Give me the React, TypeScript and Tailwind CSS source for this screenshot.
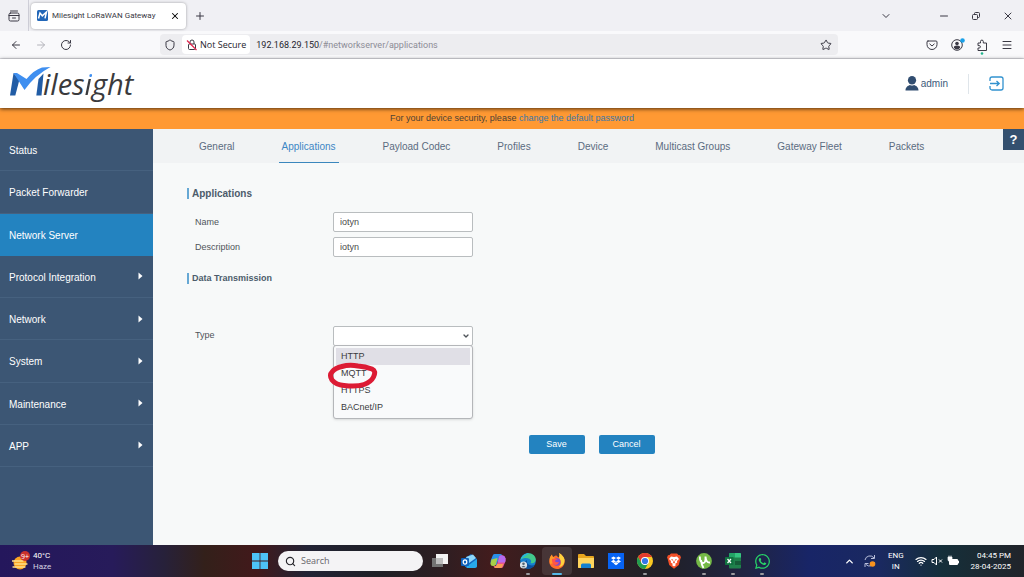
import React, { useState } from 'react';
import {
    ArrowLeft,
    ArrowRight,
    ChevronDown,
    ChevronUp,
    Menu,
    Minus,
    Plus,
    RotateCw,
    Search,
    Shield,
    Star,
    Wifi,
    X,
} from 'lucide-react';
import { FaWhatsapp } from 'react-icons/fa';

const navItems = [
    { label: 'Status', hasChildren: false },
    { label: 'Packet Forwarder', hasChildren: false },
    { label: 'Network Server', hasChildren: false },
    { label: 'Protocol Integration', hasChildren: true },
    { label: 'Network', hasChildren: true },
    { label: 'System', hasChildren: true },
    { label: 'Maintenance', hasChildren: true },
    { label: 'APP', hasChildren: true },
];

const tabs = [
    'General',
    'Applications',
    'Payload Codec',
    'Profiles',
    'Device',
    'Multicast Groups',
    'Gateway Fleet',
    'Packets',
];

const transmissionTypes = ['HTTP', 'MQTT', 'HTTPS', 'BACnet/IP'];

function TabStrip() {
    return (
        <div className="flex h-[31px] items-center bg-[#f0f0f4] text-[#3a3944]">
            <button type="button" aria-label="Recent tabs" className="flex h-full w-[29px] items-center justify-center border-r border-[#cfcfd8]">
                <svg viewBox="0 0 12 12" className="h-3 w-3" fill="none" stroke="currentColor" strokeLinecap="round">
                    <path d="M2.500 1h7M1 5.500h10M4.500 8h3" />
                    <rect x="1" y="3" width="10" height="8" rx="1.500" />
                </svg>
            </button>
            <div className="ml-0.5 flex h-[26px] w-[155px] items-center rounded-sm bg-white px-1.5 shadow-[0_0_3px_rgba(0,0,0,0.35)]">
                <svg viewBox="0 0 11 11" className="h-[11px] w-[11px] shrink-0">
                    <rect width="11" height="11" rx="1.5" fill="#2267b8" />
                    <path d="M1.5 8.5 3 3l2.3 2.8L9.5 2 8 8.3" fill="none" stroke="#fff" strokeWidth="1.5" />
                </svg>
                <span className="ml-1 flex-1 whitespace-nowrap font-[Roboto,sans-serif] text-[8px] leading-3">Milesight LoRaWAN Gateway</span>
                <button type="button" aria-label="Close tab">
                    <X className="h-2.5 w-2.5 text-black" strokeWidth={2.5} />
                </button>
            </div>
            <button type="button" aria-label="New tab" className="ml-2">
                <Plus className="h-3 w-3" strokeWidth={2} />
            </button>
            <div className="ml-auto flex items-center gap-5 pr-2.5">
                <button type="button" aria-label="List all tabs" className="mr-[26px]">
                    <ChevronDown className="h-3 w-3" />
                </button>
                <button type="button" aria-label="Minimize">
                    <Minus className="h-3 w-3" />
                </button>
                <button type="button" aria-label="Restore">
                    <svg viewBox="0 0 12 12" className="h-3 w-3" fill="none" stroke="currentColor">
                        <rect x="2.5" y="4.5" width="5" height="5" rx="1" />
                        <path d="M4.5 4V3.5a1 1 0 0 1 1-1h3a1 1 0 0 1 1 1v3a1 1 0 0 1-1 1H8" />
                    </svg>
                </button>
                <button type="button" aria-label="Close">
                    <X className="h-3 w-3" />
                </button>
            </div>
        </div>
    );
}

function AddressBar() {
    return (
        <div className="flex h-7 items-center border-b border-[#dfdfe5] bg-[#f9f9fb] text-[#3a3944]">
            <div className="flex w-40 items-center gap-[13px] pl-2.5">
                <button type="button" aria-label="Back">
                    <ArrowLeft className="h-3 w-3" strokeWidth={2} />
                </button>
                <button type="button" aria-label="Forward" className="text-[#b3b3ba]">
                    <ArrowRight className="h-3 w-3" strokeWidth={2} />
                </button>
                <button type="button" aria-label="Reload">
                    <RotateCw className="h-3 w-3" strokeWidth={2} />
                </button>
            </div>
            <div className="flex h-[21px] flex-1 items-center rounded-sm bg-[#ededf0] pr-1.5">
                <Shield className="mx-1 h-3 w-3" strokeWidth={2} />
                <div className="ml-0.5 flex h-[19px] items-center gap-0.5 rounded-sm bg-white pl-1 pr-1">
                    <svg viewBox="0 0 12 14" className="h-3.5 w-3" fill="none" stroke="currentColor">
                        <rect x="2.5" y="6" width="7" height="5.5" rx="1" />
                        <path d="M4 6V4a2 2 0 0 1 4 0v2" />
                        <path d="M1 2.5 10.5 12" stroke="#e22850" strokeWidth="1.2" />
                    </svg>
                    <span className="text-[9px] leading-3 text-[#25242c]">Not Secure</span>
                </div>
                <span className="ml-1.5 flex-1 font-[Roboto,sans-serif] text-[9px] leading-3 text-[#8c8c96]">
                    <span className="text-[#25242c]">192.168.29.150</span>/#networkserver/applications
                </span>
                <button type="button" aria-label="Bookmark">
                    <Star className="h-3 w-3" />
                </button>
            </div>
            <div className="ml-[88px] flex items-center gap-[13px] pr-[11px]">
                <button type="button" aria-label="Pocket">
                    <svg viewBox="0 0 12 12" className="h-3 w-3" fill="none" stroke="currentColor" strokeLinecap="round">
                        <path d="M2 2h8a1 1 0 0 1 1 1v2.5a5 5 0 0 1-10 0V3a1 1 0 0 1 1-1Z" />
                        <path d="m3.8 5 2.2 2 2.2-2" />
                    </svg>
                </button>
                <button type="button" aria-label="Account">
                    <svg viewBox="0 0 12 12" className="h-3 w-3 overflow-visible">
                        <circle cx="6" cy="6" r="5.3" fill="none" stroke="currentColor" />
                        <circle cx="6" cy="4.5" r="1.8" fill="currentColor" />
                        <path d="M2.8 8.8a3.2 2.4 0 0 1 6.4 0 4 4 0 0 1-6.4 0Z" fill="currentColor" />
                        <circle cx="11.5" cy="1.5" r="2.3" fill="#19a0e8" />
                    </svg>
                </button>
                <button type="button" aria-label="Extensions">
                    <svg viewBox="0 0 12 12" className="h-3 w-3 overflow-visible" fill="none" stroke="currentColor" strokeLinejoin="round">
                        <path d="M2 4H4.500V2.500a1.400 1.400 0 0 1 2.800 0V4h3.200v7.500H2V9h1.200a1.200 1.200 0 0 0 0-2.400H2Z" />
                        <circle cx="6" cy="14.5" r="1.3" fill="#20b58c" stroke="none" />
                    </svg>
                </button>
                <button type="button" aria-label="Application menu">
                    <Menu className="h-3 w-3" />
                </button>
            </div>
        </div>
    );
}

function Logo() {
    return (
        <div className="flex items-end" aria-label="Milesight">
            <svg viewBox="0 0 42 32" className="h-8 w-[42px] overflow-visible">
                <path d="M4.500 5 10.500 11.500 6.300 27.500H1Z" fill="#215ca5" />
                <path d="M34.500 5.500 32.500 27.500H27.300L29.500 11Z" fill="#215ca5" />
                <path d="M4.500 5H8L17.500 11Q25 2 33-.5L41.500-1Q26 7 15.500 22Z" fill="#3f8ff0" />
            </svg>
            <span className="-ml-2 font-['Open_Sans',sans-serif] text-[29px] italic leading-8 text-[#3a3a3c]">
                iles
                <span className="bg-[linear-gradient(#3f8ff0_38%,#3a3a3c_38%)] bg-clip-text text-transparent">i</span>
                ght
            </span>
        </div>
    );
}

function Header() {
    return (
        <header className="relative z-10 flex h-[49px] items-center bg-white pl-[9px] pr-5 shadow-[0_1px_4px_rgba(0,0,0,0.7)]">
            <Logo />
            <div className="ml-auto flex items-center gap-0.5 text-[10px] text-[#405a7a]">
                <svg viewBox="0 0 14 15" className="h-[15px] w-3.5" fill="#314d70">
                    <ellipse cx="7" cy="4.3" rx="4.1" ry="4.3" />
                    <path d="M0.5 14.5C0.5 11 3 9.7 5 9q2 1.2 4 0c2 .7 4.500 2 4.500 5.500Z" />
                </svg>
                admin
            </div>
            <div className="ml-5 h-5 w-px bg-[#dfe5ea]" />
            <a href="#logout" aria-label="Log out" className="ml-5">
                <svg viewBox="0 0 15 15" className="h-[15px] w-[15px]" fill="none" stroke="#3292cf" strokeWidth="1.3">
                    <path d="M1 5V3a2 2 0 0 1 2-2h9a2 2 0 0 1 2 2v9a2 2 0 0 1-2 2H3a2 2 0 0 1-2-2v-2" />
                    <path d="M1 7.500h9M7.500 5l2.700 2.500L7.500 10" />
                </svg>
            </a>
        </header>
    );
}

function Sidebar() {
    return (
        <nav className="w-[153px] shrink-0 bg-[#3c5674]">
            <ul className="grid h-[338px] auto-rows-fr">
                {navItems.map((item) => (
                    <li key={item.label}>
                        <a
                            href="#nav"
                            className={
                                item.label === 'Network Server'
                                    ? 'flex h-full items-center bg-[#2383c0] pl-[9px] pr-2.5 pt-0.5 text-[10px] text-white'
                                    : 'flex h-full items-center border-b border-[#46617f] pl-[9px] pr-2.5 pt-0.5 text-[10px] text-white'
                            }
                        >
                            <span className="flex-1">{item.label}</span>
                            {item.hasChildren && (
                                <svg viewBox="0 0 5 8" className="mb-0.5 h-2 w-[5px]" fill="#fff">
                                    <path d="M0.500 0.500 4.500 4 0.500 7.500Z" />
                                </svg>
                            )}
                        </a>
                    </li>
                ))}
            </ul>
        </nav>
    );
}

function SectionTabs() {
    return (
        <div className="flex h-[34px] items-start justify-between bg-[#f1f3f4]">
            <div className="flex h-full gap-[41px] pl-[43px] text-[10px] text-[#5b6b80]">
                {tabs.map((tab) => (
                    <a
                        key={tab}
                        href="#tab"
                        className={
                            tab === 'Applications'
                                ? 'flex items-center whitespace-nowrap border-b border-[#3a87bd] px-[3px] pt-0.5 text-[#3b86c4]'
                                : 'flex items-center whitespace-nowrap border-b border-transparent px-[3px] pt-0.5'
                        }
                    >
                        {tab}
                    </a>
                ))}
            </div>
            <button type="button" aria-label="Help" className="h-[21px] w-[21px] bg-[#34506f] text-[13px] font-bold leading-5 text-white">
                ?
            </button>
        </div>
    );
}

function TypeSelect() {
    const [type, setType] = useState('');

    return (
        <div className="relative w-[140px]">
            <select
                id="type"
                value={type}
                onChange={(e) => setType(e.target.value)}
                className="block h-5 w-full appearance-none rounded-xs border border-[#b9bdbf] bg-white px-1.5 text-[9px]"
            >
                <option value=""></option>
                {transmissionTypes.map((name) => (
                    <option key={name}>{name}</option>
                ))}
            </select>
            <ChevronDown className="pointer-events-none absolute right-[3px] top-1.5 h-2 w-2" strokeWidth={4} />
            <ul role="listbox" aria-label="Type" className="absolute inset-x-0 top-[19px] rounded-[3px] border border-[#b4b6b9] bg-[#f9fafb] p-0.5 shadow-sm">
                {transmissionTypes.map((name) => (
                    <li
                        key={name}
                        role="option"
                        aria-selected={name === 'HTTP'}
                        onClick={() => setType(name)}
                        className="h-[17px] px-[5px] text-[9px] leading-[17px] text-[#3b3b40] aria-selected:bg-[#e0dfe6]"
                    >
                        {name}
                    </li>
                ))}
            </ul>
            {/* Hand-drawn ring around MQTT */}
            <svg viewBox="0 0 52 28" className="pointer-events-none absolute -left-1.5 top-9 h-7 w-[52px]" fill="none" stroke="#dc1b34" strokeWidth="5" strokeLinecap="round" strokeLinejoin="round">
                <path d="M15 4.500Q8 6 5 10 2 13 5 18 9 23 17 23.500 30 25 37 22.500 44 20 46.500 15 49.500 9 45 7 38 4.500 31 4 22 2.500 15 4.500" />
            </svg>
        </div>
    );
}

function SectionTitle({ children, className }: { children: React.ReactNode; className: string }) {
    return (
        <h2 className="flex h-4 items-center font-bold text-[#4c5c6b]">
            <span className="h-[11px] w-0.5 bg-[#66a8d4]" />
            <span className={className}>{children}</span>
        </h2>
    );
}

function ApplicationForm() {
    const fieldClass = 'h-5 w-[140px] rounded-xs border border-[#b9bdbf] bg-white px-1.5 text-[9px] text-[#4a4a4a]';

    return (
        <form className="pb-6 pl-[34px] pr-7 pt-[22px] text-[9px] text-[#4f5459]" onSubmit={(e) => e.preventDefault()}>
            <SectionTitle className="pl-[3px] text-[10px]">Applications</SectionTitle>
            <div className="mt-[11px] grid grid-cols-[138px_auto] items-center justify-start gap-y-[5px] pl-2">
                <label htmlFor="name" className="pt-px">Name</label>
                <input id="name" defaultValue="iotyn" className={fieldClass} />
                <label htmlFor="description" className="pt-px">Description</label>
                <input id="description" defaultValue="iotyn" className={fieldClass} />
            </div>
            <div className="mt-[13px]">
                <SectionTitle className="pl-[3px] pt-px text-[9px]">Data Transmission</SectionTitle>
            </div>
            <div className="mt-10 grid grid-cols-[138px_auto] items-center justify-start pl-2">
                <label htmlFor="type">Type</label>
                <TypeSelect />
            </div>
            <div className="mt-[89px] flex justify-center gap-3.5">
                <button type="submit" className="h-[19px] w-14 rounded-xs bg-[#2383c0] text-white">Save</button>
                <button type="button" className="h-[19px] w-14 rounded-xs bg-[#2383c0] text-white">Cancel</button>
            </div>
        </form>
    );
}

const taskbarApps = [
    {
        name: 'Task view',
        running: false,
        icon: (
            <>
                <rect x="0" y="5" width="11" height="9" fill="#737373" />
                <rect x="4" y="1" width="12" height="10" fill="#f3f3f3" />
                <rect x="4" y="5" width="7" height="6" fill="#bdbdbd" />
            </>
        ),
    },
    {
        name: 'Outlook',
        running: false,
        icon: (
            <>
                <path d="M3 6 10 1l6 5v8H4Z" fill="#1267bf" />
                <path d="M5 4 12 1.500 15 5 8 10Z" fill="#8ed7fb" />
                <path d="m5 14 11-8v7a2 2 0 0 1-2 2H6Z" fill="#28a9ea" />
                <rect x="0" y="5" width="8" height="8" rx="1" fill="#0f61bb" />
                <ellipse cx="4" cy="9" rx="1.800" ry="2.100" fill="none" stroke="#fff" strokeWidth="1.200" />
            </>
        ),
    },
    {
        name: 'Copilot',
        running: false,
        icon: (
            <>
                <path d="M4.500 1h6q1.500 0 2 2l.500 2H9L6.500 12H1.500Q0 10 .7 7.500L2.500 3Q3 1 4.500 1Z" fill="#2a8fe8" />
                <path d="M1.500 6.500 7.500 5 6 11q-.5 2-2 2H3Q.500 13 .5 10.500Z" fill="#a8cf48" />
                <path d="M11.500 15h-6q-1.500 0-2-2h2q1 0 1.500-2L9 4q.5-1.500 2-1.500h2q2 .5 2.500 3 .2 2-.5 4L13.500 13q-.5 2-2 2Z" fill="#e9558f" />
                <path d="M10.500 2.500H13q2 .5 2.500 3 .2 2-.5 4H8l1-5q.5-2 1.500-2Z" fill="#b66af0" />
                <path d="M4.500 15h6q1.500 0 2-2l.700-2H7q-.500 2-2 2.500Z" fill="#f99b55" />
            </>
        ),
    },
    {
        name: 'Edge',
        running: true,
        icon: (
            <>
                <circle cx="8" cy="8" r="7.800" fill="#1680ce" />
                <path d="M.5 7C1.500 2.500 5 .2 8.500.2c4.500 0 7.300 3.300 7.300 6.300S13 11 10.500 10q1-1 .5-2.500C10 4.500 3.500 4 .5 7Z" fill="#43c88b" />
                <path d="M.5 7C2 2 6 0 9 .3 6 3 3 4 .5 7Z" fill="#28b5df" />
                <path d="M7 7q-1 5 5 5.500 2 0 2.700-.7Q12 16 8 15.800 3 14 4.500 9.500 5.500 7.500 7 7Z" fill="#0c4f9d" />
                <circle cx="3.500" cy="12" r="3.600" fill="#dce3e9" />
                <circle cx="3.500" cy="10.800" r="1.300" fill="#526473" />
                <path d="M1.300 14.200q2.200-3 4.400 0Z" fill="#526473" />
            </>
        ),
    },
    {
        name: 'Firefox',
        running: true,
        icon: (
            <>
                <path d="M10 0q4.500 2.500 5.500 6.500C16.500 12 12.500 16 8 16S0 12.500.2 8Q.5 4 3 1.500q0 2 1.300 2.500Q6 2 7.500 2.500 8.500 4 10 4.500 11 2 10 0Z" fill="#ff6a2b" />
                <path d="M10 0q4.500 2.500 5.500 6.500C16 11 13 14 10 14q4-4 0-9.500Q11 2 10 0Z" fill="#ffd33e" />
                <path d="M.5 6Q1 3.500 3 1.500q0 2 1.300 2.500L8 6l-3 4-4 1Z" fill="#ff9a29" />
                <circle cx="7.800" cy="9" r="3.700" fill="#7849d5" />
                <path d="M3 6q3-1.200 6 .5-3 0-3 2 2 1.500 4 .3-1 3.500-4 3.200Q2.500 11 3 6Z" fill="#ff5548" />
            </>
        ),
    },
    {
        name: 'File Explorer',
        running: false,
        icon: (
            <>
                <path d="M0 2q0-1 1-1h5l2 2h7q1 0 1 1v10q0 1-1 1H1q-1 0-1-1Z" fill="#e8a51e" />
                <path d="M0 5h16v9q0 1-1 1H1q-1 0-1-1Z" fill="#ffd45d" />
                <path d="M3 15v-3q0-1.500 1.500-1.500h7Q13 10.500 13 12v3Z" fill="#1680cf" />
            </>
        ),
    },
    {
        name: 'Dropbox',
        running: false,
        icon: (
            <>
                <rect width="16" height="16" fill="#0763f4" />
                <path d="m5.500 3.500 2.500 1.600-2.500 1.600L3 5.100Zm5 0L13 5.100l-2.500 1.600L8 5.100Zm-5 3.300L8 8.400 5.500 10 3 8.400Zm5 0L13 8.400 10.500 10 8 8.400ZM8 9l2.500 1.600L8 12.200l-2.500-1.600Z" fill="#fff" />
            </>
        ),
    },
    {
        name: 'Chrome',
        running: true,
        icon: (
            <>
                <circle cx="8" cy="8" r="8" fill="#fac922" />
                <path d="M1.070 4A8 8 0 0 1 14.930 4H8L4.540 10Z" fill="#e33b2e" />
                <path d="M1.070 4A8 8 0 0 0 8 16L11.460 10 8 8 4.540 10Z" fill="#229c50" />
                <circle cx="8" cy="8" r="4" fill="#fff" />
                <circle cx="8" cy="8" r="3.100" fill="#3577e8" />
            </>
        ),
    },
    {
        name: 'Brave',
        running: false,
        icon: (
            <>
                <path d="M5 .5h6L12.500 2l1.500.2 1 2.300-.7 1.500-1.500 6L8 15.800 3.200 12 1.700 6 1 4.500l1-2.300L3.500 2Z" fill="#f45128" />
                <path d="M5 3.500 8 4l3-.5 2 2.500-2 2 .2 1.500L9 11l1 1-2 1.500L6 12l1-1-2.200-1.500L5 8 3 6Z" fill="#fff" />
                <path d="m5 6 2 .5L6.500 8ZM11 6l-2 .5.5 1.500ZM8 7l1 2.500-1 1-1-1Z" fill="#f45128" />
            </>
        ),
    },
    {
        name: 'uTorrent',
        running: true,
        icon: (
            <>
                <circle cx="8" cy="8" r="7.900" fill="#75b947" />
                <path d="M3.800 3.500Q4 9.500 7 10q3 .3 2.500-6.500.5 6.500 4.500 6M5 7q.500 5 2.500 8" fill="none" stroke="#fff" strokeWidth="1.900" />
            </>
        ),
    },
    {
        name: 'Excel',
        running: true,
        icon: (
            <>
                <rect x="4" y="0" width="12" height="15.500" rx="1" fill="#20804c" />
                <path d="M10 0h5q1 0 1 1v3.500h-6Z" fill="#36c481" />
                <path d="M4 1q0-1 1-1h5v4.500H4Z" fill="#23a366" />
                <path d="M10 8h6v4h-6Z" fill="#155c38" />
                <rect x="0" y="4" width="8.500" height="8" rx=".7" fill="#107340" />
                <path d="m2.500 6 3.500 4M6 6l-3.500 4" stroke="#fff" strokeWidth="1.200" />
            </>
        ),
    },
];

function Taskbar() {
    return (
        <footer className="grid h-8 grid-cols-[1fr_auto_1fr] items-center bg-[linear-gradient(90deg,#24175c_0%,#271b5a_11%,#27213a_16%,#33201a_20%,#42191b_25%,#222335_30%,#1f2026_37%,#2d1e22_43%,#421c1d_48%,#2e2022_55%,#202028_65%,#202443_73%,#182567_79%,#1a2960_86%,#152f3a_92%,#21242a_100%)] font-['Open_Sans','Noto_Sans',sans-serif] text-white">
            <div className="flex items-center gap-[3px] pl-3">
                <svg viewBox="0 0 18 20" className="h-5 w-[18px]">
                    <circle cx="8" cy="12" r="6.500" fill="#fba523" />
                    <path d="M0 10h11M3 13h12M1 16h12" stroke="#ffe08b" strokeWidth="1.300" strokeLinecap="round" />
                    <circle cx="13" cy="5" r="5" fill="#ca302c" />
                    <text x="13" y="7.500" textAnchor="middle" fontSize="7" fill="#fff">9+</text>
                </svg>
                <div className="font-[Roboto,sans-serif] text-[8px] leading-[11px]">
                    <div>40°C</div>
                    <div className="text-[#d5d2e0]">Haze</div>
                </div>
            </div>

            <div className="flex items-center pl-[5px]">
                <button type="button" aria-label="Start">
                    <svg viewBox="0 0 16 16" className="h-4 w-4" fill="#4dc3f7">
                        <path d="M0 0h7.600v7.600H0ZM8.400 0H16v7.600H8.400ZM0 8.400h7.600V16H0ZM8.400 8.400H16V16H8.400Z" />
                    </svg>
                </button>
                <label className="ml-2.5 flex h-5 w-[145px] items-center gap-[5px] rounded-full bg-[#f4f3f5] px-[7px] text-[#26252b]">
                    <Search className="h-[11px] w-[11px]" strokeWidth={2.5} />
                    <input aria-label="Search" placeholder="Search" className="min-w-0 flex-1 text-[9px] leading-4 outline-none placeholder:text-[#66656b]" />
                </label>
                <div className="ml-0.5 grid w-[352px] grid-cols-12">
                    {taskbarApps.map((app) => (
                        <button
                            key={app.name}
                            type="button"
                            aria-label={app.name}
                            className={
                                app.name === 'Firefox'
                                    ? 'relative flex h-7 items-center justify-center rounded-sm bg-white/10'
                                    : 'relative flex h-7 items-center justify-center'
                            }
                        >
                            <svg viewBox="0 0 16 16" className="h-4 w-4">{app.icon}</svg>
                            {app.running && (
                                <span
                                    className={
                                        app.name === 'Firefox'
                                            ? 'absolute bottom-0 h-0.5 w-2.5 rounded-full bg-[#55b9e8]'
                                            : 'absolute bottom-0 h-0.5 w-1 rounded-full bg-[#9b9b9f]'
                                    }
                                />
                            )}
                        </button>
                    ))}
                    <button type="button" aria-label="WhatsApp" className="relative flex h-7 items-center justify-center">
                        <FaWhatsapp className="h-[17px] w-[17px] text-[#27d267]" />
                        <span className="absolute bottom-0 h-0.5 w-1 rounded-full bg-[#9b9b9f]" />
                    </button>
                </div>
            </div>

            <div className="flex items-center justify-end pr-[13px] font-[Roboto,sans-serif] text-[8px] leading-[11px]">
                <ChevronUp className="h-[11px] w-[11px]" strokeWidth={3} />
                <svg viewBox="0 0 14 14" className="ml-2 h-3.5 w-3.5">
                    <path d="M2 6A5 5 0 0 1 11 4M11.500 1v3.500H8M11.500 8A5 5 0 0 1 3 10.500M2 13V9.500h3.500" fill="none" stroke="#b9bfdb" />
                    <circle cx="9.500" cy="10" r="2.800" fill="#f8921e" />
                </svg>
                <div className="ml-[11px] text-center">
                    <div>ENG</div>
                    <div>IN</div>
                </div>
                <Wifi className="ml-[11px] h-3 w-3" strokeWidth={2.5} />
                <svg viewBox="0 0 12 12" className="ml-1 h-3 w-3" fill="none" stroke="currentColor">
                    <path d="M1 4.500h2L5.500 2v8L3 7.500H1ZM8 4.500l3 3M11 4.500l-3 3" />
                </svg>
                <svg viewBox="0 0 12 12" className="ml-1 h-3 w-3">
                    <rect x="2" y="4" width="9" height="6" rx="1" fill="#fff" />
                    <path d="M11 6h1v2h-1ZM1 2h4v2.500a2 2 0 0 1-4 0ZM2 .5V2M4 .5V2" fill="#fff" stroke="#fff" strokeWidth=".7" />
                </svg>
                <div className="ml-3 whitespace-nowrap text-right">
                    <div>04:45 PM</div>
                    <div>28-04-2025</div>
                </div>
            </div>
        </footer>
    );
}

export default function App() {
    return (
        <div className="flex min-h-screen flex-col font-['Liberation_Sans',Arial,sans-serif]">
            <div className="font-['Open_Sans','Noto_Sans',sans-serif]">
                <TabStrip />
                <AddressBar />
            </div>
            <Header />
            <div className="flex h-[21px] items-center justify-center bg-[#ff9933] text-[9px] text-[#4d4236]">
                <p>
                    For your device security, please <a href="#password" className="text-[#3d78a8]">change the default password</a>
                </p>
            </div>
            <div className="flex flex-1">
                <Sidebar />
                <main className="min-w-0 flex-1 bg-[#f7f9f9]">
                    <SectionTabs />
                    <ApplicationForm />
                </main>
            </div>
            <Taskbar />
        </div>
    );
}
